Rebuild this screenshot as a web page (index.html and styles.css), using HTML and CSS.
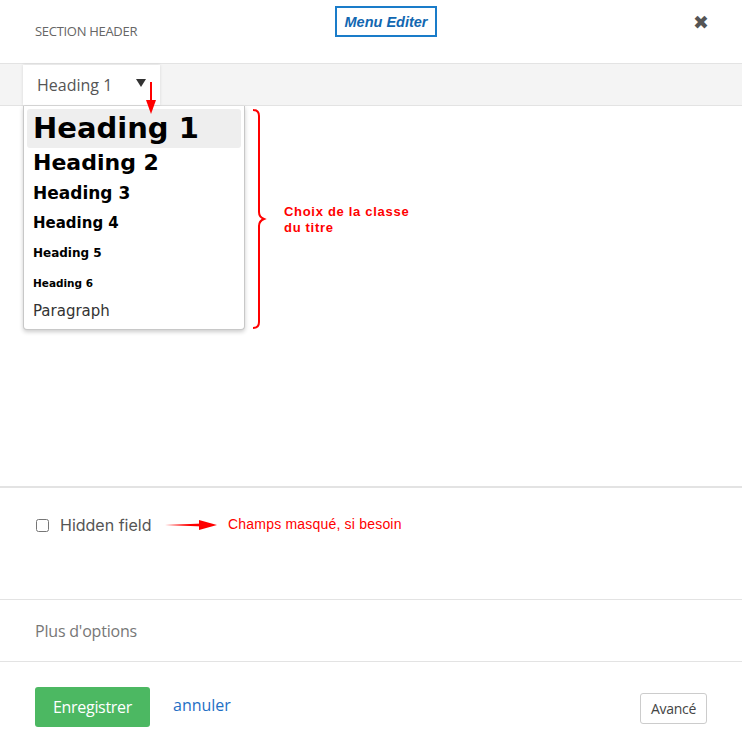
FILE: index.html
```html
<!DOCTYPE html>
<html lang="fr">
<head>
  <meta charset="UTF-8">
  <title>Section header</title>
  <link rel="stylesheet" href="styles.css">
</head>
<body>
  <div class="modal">
    <div class="modal-head">
      <span class="modal-title">SECTION HEADER</span>
      <span class="close">&#10006;</span>
    </div>

    <div class="toolbar">
      <div class="select">
        <span>Heading 1</span>
        <span class="caret"></span>
      </div>
    </div>

    <div class="editor">
      <ul class="dropdown">
        <li class="opt h1 active">Heading 1</li>
        <li class="opt h2">Heading 2</li>
        <li class="opt h3">Heading 3</li>
        <li class="opt h4">Heading 4</li>
        <li class="opt h5">Heading 5</li>
        <li class="opt h6">Heading 6</li>
        <li class="opt p">Paragraph</li>
      </ul>
    </div>

    <div class="fields">
      <label class="check">
        <input type="checkbox">
        <span>Hidden field</span>
      </label>
    </div>

    <div class="more">Plus d'options</div>

    <div class="actions">
      <button class="btn-save">Enregistrer</button>
      <a class="cancel" href="#">annuler</a>
      <button class="btn-adv">Avancé</button>
    </div>
  </div>

  <!-- notes -->
  <div class="note-label">Menu Editer</div>

  <svg class="note-arrow-down" width="12" height="34" viewBox="0 0 12 34">
    <path d="M6 0 L6 20" stroke="#f00" stroke-width="2"/>
    <path d="M1 18 L11 18 L6 32 Z" fill="#f00"/>
  </svg>

  <svg class="note-brace" width="16" height="222" viewBox="0 0 16 222">
    <path d="M2 2 Q8 2 8 8 L8 104 Q8 109 13 111 Q8 113 8 118 L8 214 Q8 220 2 220" fill="none" stroke="#f00" stroke-width="2"/>
  </svg>
  <div class="note-text note-class">Choix de la classe<br>du titre</div>

  <svg class="note-arrow-right" width="54" height="12" viewBox="0 0 54 12">
    <path d="M0 6 L38 4.5 L38 7.5 Z" fill="#f00"/>
    <path d="M34 1 L52 6 L34 11 Z" fill="#f00"/>
  </svg>
  <div class="note-hidden">Champs masqué, si besoin</div>
</body>
</html>
```

FILE: styles.css
```css
* {
  box-sizing: border-box;
}

html, body {
  margin: 0;
  padding: 0;
  background: #fff;
  font-family: 'Open Sans', sans-serif;
}

.modal {
  width: 742px;
  display: flex;
  flex-direction: column;
}

.modal-head {
  height: 64px;
  display: flex;
  align-items: center;
  justify-content: space-between;
  padding: 0 33px 2px 35px;
  border-bottom: 1px solid #e3e3e3;
}

.modal-title {
  font-size: 13px;
  color: #666;
  letter-spacing: -0.3px;
}

.close {
  font-size: 19px;
  color: #555;
  margin-top: -18px;
}

.toolbar {
  height: 42px;
  background: #f4f4f4;
  border-bottom: 1px solid #e3e3e3;
  padding-left: 23px;
  display: flex;
}

.select {
  width: 137px;
  background: #fff;
  display: flex;
  align-items: center;
  justify-content: space-between;
  padding: 0 14px 0 14px;
  font-size: 16px;
  color: #555;
  box-shadow: 0 0 3px rgba(0, 0, 0, 0.12);
  margin-top: 1px;
}

.caret {
  width: 0;
  height: 0;
  border-left: 5px solid transparent;
  border-right: 5px solid transparent;
  border-top: 8px solid #333;
  margin-top: -4px;
}

.editor {
  height: 382px;
  border-bottom: 2px solid #e3e3e3;
  padding-left: 23px;
}

.dropdown {
  list-style: none;
  margin: 0;
  width: 222px;
  padding: 3px 3px 4px;
  border: 1px solid #c8c8c8;
  border-top: none;
  border-radius: 0 0 4px 4px;
  box-shadow: 0 2px 4px rgba(0, 0, 0, 0.2);
  background: #fff;
  font-family: 'DejaVu Sans', Verdana, sans-serif;
  color: #000;
}

.opt {
  padding: 0 6px;
  font-weight: bold;
  white-space: nowrap;
}

.opt.active {
  background: #eee;
  border-radius: 3px;
}

.h1 { font-size: 29px; height: 39px; line-height: 39px; }
.h2 { font-size: 22px; height: 30px; line-height: 30px; }
.h3 { font-size: 17px; height: 31px; line-height: 31px; }
.h4 { font-size: 15px; height: 29px; line-height: 29px; }
.h5 { font-size: 12px; height: 30px; line-height: 30px; }
.h6 { font-size: 10.5px; height: 30px; line-height: 30px; }
.p  { font-size: 15px; height: 27px; line-height: 27px; font-weight: normal; color: #333; }

.fields {
  height: 112px;
  border-bottom: 1px solid #e3e3e3;
  padding: 27px 0 0 36px;
}

.check {
  display: flex;
  align-items: center;
  gap: 11px;
  font-family: 'Inter', 'Noto Sans', sans-serif;
  font-size: 16px;
  color: #555;
}

.check input {
  width: 13px;
  height: 13px;
  margin: 0;
}

.more {
  height: 62px;
  border-bottom: 1px solid #e3e3e3;
  padding-left: 35px;
  display: flex;
  align-items: center;
  font-size: 16px;
  color: #777;
  letter-spacing: -0.2px;
}

.actions {
  display: flex;
  align-items: flex-start;
  padding: 25px 35px 0 35px;
}

.btn-save {
  height: 40px;
  width: 115px;
  background: #4cb862;
  color: #fff;
  border: none;
  border-radius: 3px;
  font-family: 'Open Sans', sans-serif;
  font-size: 16px;
  letter-spacing: -0.3px;
}

.cancel {
  margin-left: 23px;
  margin-top: 7px;
  color: #1f6fc5;
  text-decoration: none;
  font-size: 16px;
}

.btn-adv {
  margin-left: auto;
  margin-top: 6px;
  height: 31px;
  width: 67px;
  padding: 0;
  background: #fff;
  border: 1px solid #ccc;
  border-radius: 3px;
  font-family: 'Open Sans', sans-serif;
  font-size: 14px;
  color: #444;
  letter-spacing: -0.3px;
}

/* annotations drawn over the form */
.note-label {
  position: absolute;
  left: 335px;
  top: 6px;
  width: 102px;
  height: 31px;
  border: 2px solid #1a7cc9;
  color: #1167b1;
  font-family: 'Liberation Sans', Arial, sans-serif;
  font-size: 14.5px;
  font-weight: bold;
  font-style: italic;
  display: flex;
  align-items: center;
  justify-content: center;
  background: #fff;
}

.note-arrow-down {
  position: absolute;
  left: 145px;
  top: 82px;
}

.note-brace {
  position: absolute;
  left: 251px;
  top: 108px;
}

.note-text {
  position: absolute;
  font-family: 'Liberation Sans', Arial, sans-serif;
  color: #f00;
}

.note-class {
  left: 284px;
  top: 204px;
  font-size: 13px;
  font-weight: bold;
  letter-spacing: 0.7px;
  line-height: 16px;
}

.note-arrow-right {
  position: absolute;
  left: 165px;
  top: 519px;
}

.note-hidden {
  position: absolute;
  left: 228px;
  top: 516px;
  font-family: 'Liberation Sans', Arial, sans-serif;
  font-size: 14px;
  letter-spacing: 0.2px;
  color: #f00;
}
```
